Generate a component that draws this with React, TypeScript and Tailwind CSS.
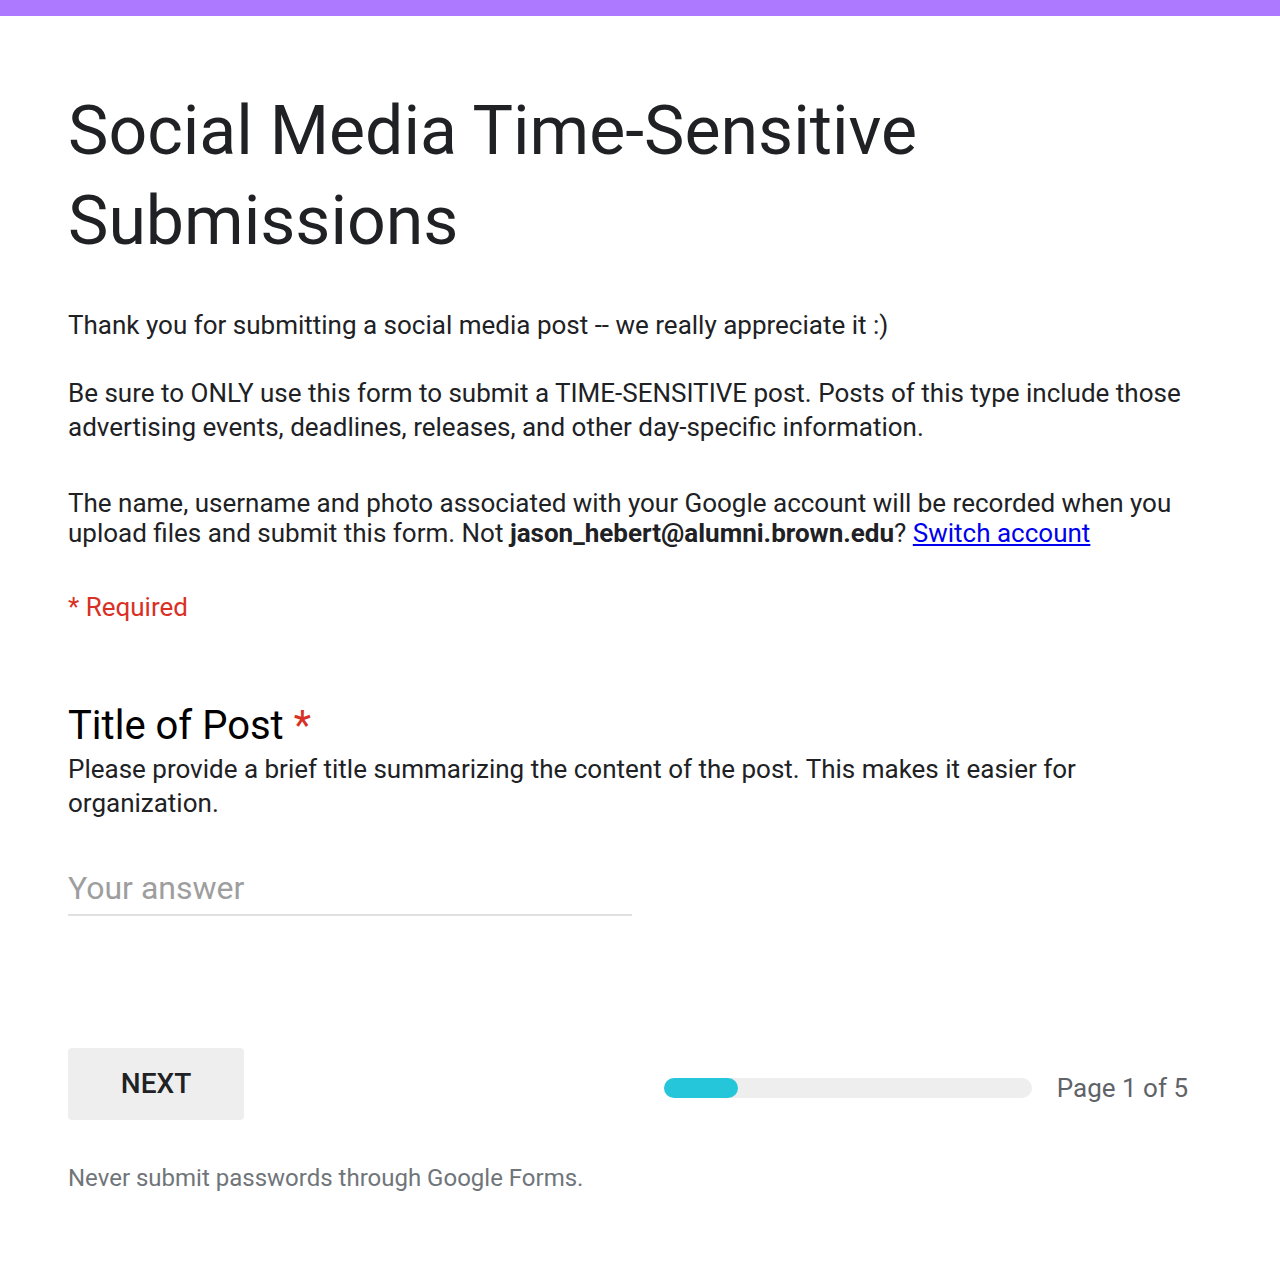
export default function App() {
  return (
    <div className="min-h-[1272px] bg-white text-[#202124]" style={{ fontFamily: "Roboto, 'Liberation Sans', sans-serif" }}>
      <div className="h-4 bg-[#ad7aff]" />
      <div className="px-[68px] pt-[70px]">
        <h1 className="text-[68px] leading-[90px] font-normal max-w-[900px]">
          Social Media Time-Sensitive Submissions
        </h1>

        <div className="mt-[42px] text-[26px] leading-[34px]">
          <p>Thank you for submitting a social media post -- we really appreciate it :)</p>
          <p className="mt-[34px]">
            Be sure to ONLY use this form to submit a TIME-SENSITIVE post. Posts of this type include those
            advertising events, deadlines, releases, and other day-specific information.
          </p>
        </div>

        <p className="mt-[44px] text-[26px] leading-[30px]">
          The name, username and photo associated with your Google account will be recorded when you upload
          files and submit this form. Not <span className="font-bold">jason_hebert@alumni.brown.edu</span>?{" "}
          <a href="#" className="text-[#0000ee] underline">
            Switch account
          </a>
        </p>

        <p className="mt-[44px] text-[26px] leading-[30px] text-[#d93025]">* Required</p>

        <div className="mt-[80px]">
          <h2 className="text-[40px] leading-[48px] text-[#000]">
            Title of Post <span className="text-[#d93025]">*</span>
          </h2>
          <p className="mt-[2px] text-[26px] leading-[34px]">
            Please provide a brief title summarizing the content of the post. This makes it easier for
            organization.
          </p>
          <div className="mt-[48px] w-[564px] border-b-2 border-[#e0e0e0] pb-[6px]">
            <input
              className="w-full text-[32px] leading-[40px] outline-none placeholder:text-[#9e9e9e]"
              placeholder="Your answer"
            />
          </div>
        </div>

        <div className="mt-[132px] flex items-center">
          <button className="w-[176px] h-[72px] rounded-[4px] bg-[#eeeeee] text-[28px] font-medium text-[#202124]">
            NEXT
          </button>
          <div className="ml-auto flex items-center pt-[8px]">
            <div className="w-[368px] h-[20px] rounded-full bg-[#eeeeee]">
              <div className="w-[74px] h-[20px] rounded-full bg-[#26c6da]" />
            </div>
            <span className="ml-[25px] text-[26px] text-[#5f6368]">Page 1 of 5</span>
          </div>
          <div className="w-[24px]" />
        </div>

        <p className="mt-[40px] text-[24px] text-[#70757a]">Never submit passwords through Google Forms.</p>
      </div>
    </div>
  );
}
